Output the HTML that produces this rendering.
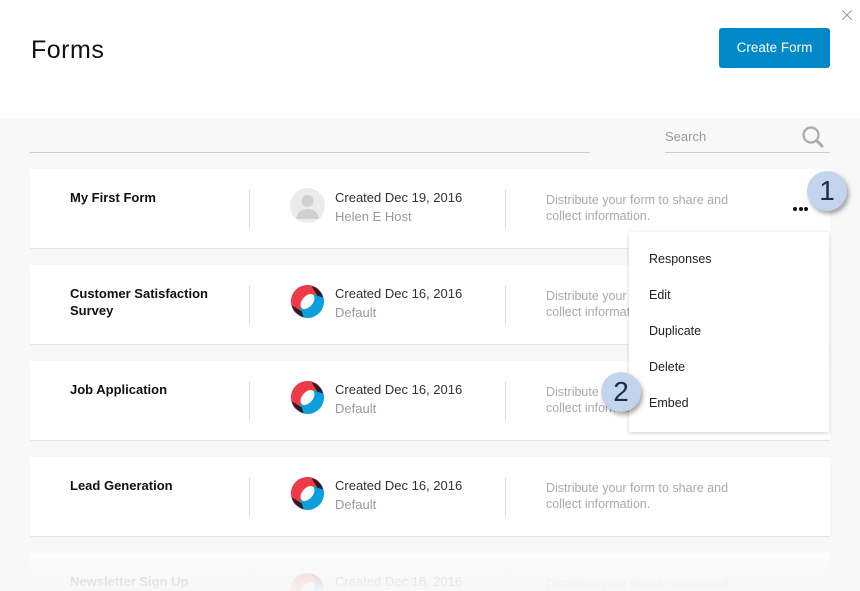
<!DOCTYPE html>
<html><head><style>
*{margin:0;padding:0;box-sizing:border-box}
html,body{width:860px;height:591px;overflow:hidden}
body{background:#f8f8f8;font-family:"Liberation Sans",sans-serif;position:relative}
.hdr{position:absolute;left:0;top:0;width:860px;height:118px;background:#fff}
h1{position:absolute;left:31px;top:36px;font-size:25px;font-weight:normal;color:#111;letter-spacing:.5px}
.close{position:absolute;left:841px;top:8px;font-size:14px;color:#aaa;font-weight:300}
.btn{position:absolute;left:719px;top:28px;width:111px;height:40px;background:#0088c8;border-radius:3px;color:#fff;font-size:13.5px;text-align:center;line-height:40px}
.line1{position:absolute;left:30px;top:152px;width:560px;border-top:1px solid #ccc}
.search{position:absolute;left:665px;top:129px;font-size:13px;color:#999}
.line2{position:absolute;left:665px;top:152px;width:165px;border-top:1px solid #ccc}
.card{position:absolute;left:30px;width:800px;height:80px;background:#fff;border-bottom:1px solid #e6e6e6;overflow:hidden}
.name{position:absolute;left:40px;top:20px;font-size:13px;font-weight:bold;color:#111;line-height:17px;width:170px}
.sep{position:absolute;top:20px;height:40px;border-left:1px solid #ddd}
.av{position:absolute;left:260px;top:19px;width:35px;height:35px}
.cr{position:absolute;left:305px;top:19px;font-size:13px;color:#333;line-height:19px}
.cr span{color:#999}
.ds{position:absolute;left:516px;top:23px;font-size:12.5px;color:#aaa;line-height:16px}
.menu{position:absolute;left:629px;top:232px;width:200px;height:200px;background:#fff;box-shadow:0 1px 4px rgba(0,0,0,.18);border-radius:2px}
.menu div{position:absolute;left:20px;font-size:12.5px;color:#222}
.badge{position:absolute;width:40px;height:40px;border-radius:50%;background:#c3d5ec;box-shadow:2px 3px 4px rgba(0,0,0,.35);font-size:28px;color:#1c2c4c;text-align:center;line-height:40px}
.fade{position:absolute;left:0;top:545px;width:860px;height:46px;background:linear-gradient(rgba(248,248,248,0),rgba(248,248,248,.85) 50%,rgba(248,248,248,.95))}
.dot{position:absolute;top:38px;width:4px;height:4px;border-radius:50%;background:#111}
</style></head><body>
<div class="hdr"></div>
<h1>Forms</h1>
<svg style="position:absolute;left:842px;top:10px" width="10" height="10"><path d="M0 0L10 10M10 0L0 10" stroke="#999" stroke-width="1"/></svg>
<div class="btn">Create Form</div>
<div class="line1"></div>
<div class="search">Search</div>
<svg style="position:absolute;left:801px;top:125px" width="24" height="24" viewBox="0 0 24 24"><circle cx="10" cy="10" r="7.5" fill="none" stroke="#aaa" stroke-width="2.2"/><path d="M15.5 15.5L21 21" stroke="#aaa" stroke-width="3" stroke-linecap="round"/></svg>
<div class="line2"></div>

<svg width="0" height="0" style="position:absolute"><defs>
<symbol id="logo" viewBox="0 0 36 36"><circle cx="18" cy="18" r="17" fill="#0aa0e0"/><path d="M1 18A17 17 0 0 1 30 6L6 30A17 17 0 0 1 1 18z" fill="#ee3a46"/><path d="M22 2A17 17 0 0 1 34 14L28 12z M2 22A17 17 0 0 0 14 34L12 28z" fill="#3a1a1e"/><ellipse cx="18" cy="18" rx="9" ry="5.5" transform="rotate(-50 18 18)" fill="#fff"/></symbol>
</defs></svg>

<div class="card" style="top:169px"><div class="name">My First Form</div><div class="sep" style="left:219px"></div>
<svg class="av" viewBox="0 0 35 35"><circle cx="17.5" cy="17.5" r="17.5" fill="#ebebeb"/><circle cx="17.5" cy="13" r="6" fill="#d0d0d0"/><path d="M6 31c1-7 6-10 11.5-10S28 24 29 31z" fill="#d0d0d0"/></svg>
<div class="cr">Created Dec 19, 2016<br><span>Helen E Host</span></div><div class="sep" style="left:475px"></div>
<div class="ds">Distribute your form to share and<br>collect information.</div>
<div class="dot" style="left:763px"></div><div class="dot" style="left:768.5px"></div><div class="dot" style="left:774px"></div></div>

<div class="card" style="top:265px"><div class="name">Customer Satisfaction Survey</div><div class="sep" style="left:219px"></div>
<svg class="av"><use href="#logo"/></svg><div class="cr">Created Dec 16, 2016<br><span>Default</span></div><div class="sep" style="left:475px"></div>
<div class="ds">Distribute your form to share and<br>collect information.</div></div>

<div class="card" style="top:361px"><div class="name">Job Application</div><div class="sep" style="left:219px"></div>
<svg class="av"><use href="#logo"/></svg><div class="cr">Created Dec 16, 2016<br><span>Default</span></div><div class="sep" style="left:475px"></div>
<div class="ds">Distribute your form to share and<br>collect information.</div></div>

<div class="card" style="top:457px"><div class="name">Lead Generation</div><div class="sep" style="left:219px"></div>
<svg class="av"><use href="#logo"/></svg><div class="cr">Created Dec 16, 2016<br><span>Default</span></div><div class="sep" style="left:475px"></div>
<div class="ds">Distribute your form to share and<br>collect information.</div></div>

<div class="card" style="top:553px;height:38px;border:none"><div class="name">Newsletter Sign Up</div><div class="sep" style="left:219px"></div>
<svg class="av"><use href="#logo"/></svg><div class="cr">Created Dec 16, 2016<br><span>Default</span></div><div class="sep" style="left:475px"></div>
<div class="ds">Distribute your form to share and<br>collect information.</div></div>
<div class="fade"></div>

<div class="menu">
<div style="top:20px">Responses</div><div style="top:56px">Edit</div><div style="top:92px">Duplicate</div><div style="top:128px">Delete</div><div style="top:164px">Embed</div>
</div>
<div class="badge" style="left:807px;top:171px">1</div>
<div class="badge" style="left:601px;top:372px">2</div>
</body></html>
